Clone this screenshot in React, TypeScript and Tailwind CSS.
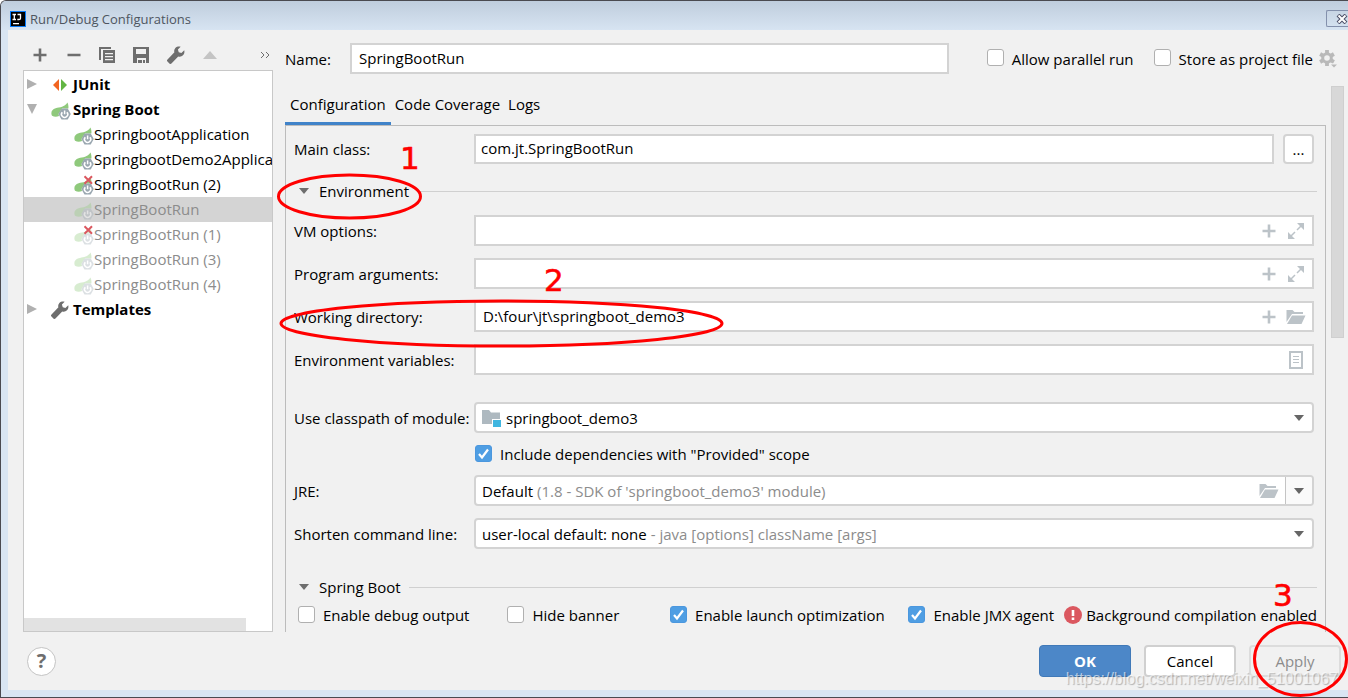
import type { ReactNode } from "react";
import clsx from "clsx";

interface TreeItem {
  label: string;
  faded?: boolean;
  broken?: boolean;
  selected?: boolean;
}

const CONFIGS: TreeItem[] = [
  { label: "SpringbootApplication" },
  { label: "SpringbootDemo2Application" },
  { label: "SpringBootRun (2)", broken: true },
  { label: "SpringBootRun", faded: true, selected: true },
  { label: "SpringBootRun (1)", faded: true, broken: true },
  { label: "SpringBootRun (3)", faded: true },
  { label: "SpringBootRun (4)", faded: true },
];

const FIELD = "h-[31px] bg-white border-2 border-[#d3d3d3]";

function IdeaLogo() {
  return (
    <svg className="w-4 h-4 shrink-0" viewBox="0 0 16 16">
      <path d="M0 0h16v16H0z" fill="#087cfa" />
      <path d="M1 1h14v14H1z" fill="#000" />
      <path d="M2.500 3.500h3.500M4.300 3.500v5M2.500 8.500h3.500M7.500 3.500h3v3.700q0 1.300-1.500 1.300H7.300" fill="none" stroke="#fff" strokeWidth="1.3" />
      <path d="M3 12h6v1.300H3z" fill="#fff" />
    </svg>
  );
}

function PlusIcon() {
  return (
    <svg className="w-3.5 h-3.5" viewBox="0 0 14 14">
      <path d="M5.700.5h2.600v5.200h5.200v2.600H8.300v5.200H5.700V8.300H.5V5.700h5.200z" fill="currentColor" />
    </svg>
  );
}

function MinusIcon() {
  return (
    <svg className="w-3.5 h-3.5" viewBox="0 0 14 14">
      <path d="M.5 5.700h13v2.600H.5z" fill="currentColor" />
    </svg>
  );
}

function CopyIcon() {
  return (
    <svg className="w-4 h-4" viewBox="0 0 16 16">
      <path d="M0 0h12v2H2v11H0z" fill="currentColor" />
      <path fillRule="evenodd" d="M4 3h12v13H4zM6 6v1.2h8V6zM6 9v1.2h8V9zM6 12v1.2h8V12z" fill="currentColor" />
    </svg>
  );
}

function SaveIcon() {
  return (
    <svg className="w-4 h-4" viewBox="0 0 16 16">
      <path fillRule="evenodd" d="M0 0h16v16h-3v-5H4v5H0zM3 2v5h10V2z" fill="currentColor" />
      <path d="M5 13h4v3H5zM10 13h2v3h-2z" fill="currentColor" />
    </svg>
  );
}

function WrenchIcon() {
  return (
    <svg className="w-[18px] h-[18px] shrink-0" viewBox="0 0 17 17">
      <path
        d="M16.3 4.1 13.6 6.7 11.1 6 10.3 3.4 12.9.6C11.2.1 9.2.4 7.9 1.8 6.8 3 6.500 4.600 7 6L.5 12.700a1.400 1.400 0 0 0 0 2L2.200 16.500a1.400 1.400 0 0 0 2 0L10.600 9.800c1.500.6 3.300.2 4.500-1 1.200-1.300 1.600-3.100 1.200-4.700z"
        fill="currentColor"
      />
    </svg>
  );
}

function Arrow({ dir, className }: { dir: "up" | "down" | "right"; className: string }) {
  const d = dir === "up" ? "M0 10 5 0l5 10z" : dir === "down" ? "M0 0h10L5 10z" : "M0 0l10 5-10 5z";
  return (
    <svg className={className} viewBox="0 0 10 10" preserveAspectRatio="none">
      <path d={d} fill="currentColor" />
    </svg>
  );
}

function JUnitIcon() {
  return (
    <svg className="w-[18px] h-[18px] shrink-0" viewBox="0 0 18 18">
      <path d="M8 3v12L2 9z" fill="#f26522" />
      <path d="M10 3v12l6-6z" fill="#62b543" />
    </svg>
  );
}

function SpringIcon({ faded, broken }: { faded?: boolean; broken?: boolean }) {
  return (
    <svg className="w-5 h-5 shrink-0" viewBox="0 0 20 20">
      <g opacity={faded ? 0.35 : 1}>
        <path
          d="M16.500 2.500c.9 2 1.100 4 .9 6H11L7.500 14l.6 2C5.500 17.200 3.400 17 1 15.800-.6 12.500.8 9.500 4.600 8.300 9 7 13.500 7.300 16.500 2.500z"
          fill="#8fc97c"
        />
        <path d="M10.500 8.500h6.200l3.100 5.500-3.100 5.500h-6.200L7.400 14z" fill="#9aa7b0" />
        <path d="M11.300 12.200a3.100 3.100 0 1 0 4.600 0M13.600 10.500v3.700" fill="none" stroke="#fff" strokeWidth="1.500" />
      </g>
      {broken && <path d="m10.500 1.300 7.500 7.500m0-7.500-7.500 7.500" stroke="#db5860" strokeWidth="2" />}
    </svg>
  );
}

function GearIcon() {
  return (
    <svg className="w-[18px] h-[18px]" viewBox="0 0 18 18">
      <path d="M8 0v16M1.100 4l13.800 8M14.900 4l-13.800 8" stroke="#b9b9b9" strokeWidth="3.800" />
      <circle cx="8" cy="8" r="4.300" fill="#f1f1f1" stroke="#b9b9b9" strokeWidth="3" />
      <path d="M10.500 13.500H18v4h-4z" fill="#f1f1f1" />
      <path d="M12 14.500h6l-3 3z" fill="#b9b9b9" />
    </svg>
  );
}

function ExpandIcon() {
  return (
    <svg className="w-4 h-4" viewBox="0 0 16 16">
      <path d="M9 0h7v7zM0 9v7h7z" fill="currentColor" />
      <path d="m9 7 4-4M7 9l-4 4" stroke="currentColor" strokeWidth="1.500" />
    </svg>
  );
}

function FolderIcon() {
  return (
    <svg className="w-5 h-4" viewBox="0 0 20 16">
      <path d="M.5 1h6l2 2h8.500v2H6L.5 13z" fill="currentColor" />
      <path d="M6 6.500h13.500L15.500 15H1z" fill="currentColor" />
    </svg>
  );
}

function ListIcon() {
  return (
    <svg className="w-3.5 h-[18px]" viewBox="0 0 14 18">
      <path d="M1 1h12v16H1z" fill="none" stroke="currentColor" strokeWidth="2" />
      <path d="M4 5.500h6M4 8.500h6M4 11.500h6" stroke="currentColor" strokeWidth="1.200" />
    </svg>
  );
}

function ModuleIcon() {
  return (
    <svg className="w-5 h-5 shrink-0" viewBox="0 0 20 20">
      <path d="M0 2h7l2 2.500h9v6.500h-8v5H0z" fill="#aeb9c0" />
      <path d="M11 12h8v7h-8z" fill="#40b6e0" />
    </svg>
  );
}

function CheckBox({ label, checked }: { label: string; checked?: boolean }) {
  return (
    <label className="flex items-center gap-2 whitespace-nowrap">
      <span className="grid pb-0.5">
        <input
          type="checkbox"
          defaultChecked={checked}
          className="peer col-start-1 row-start-1 appearance-none w-[17px] h-[17px] rounded-[3px] border border-[#b0b0b0] bg-white checked:border-[#4b97de] checked:bg-[#4f9ee3]"
        />
        <svg
          className="col-start-1 row-start-1 w-[17px] h-[17px] pointer-events-none opacity-0 peer-checked:opacity-100"
          viewBox="0 0 17 17"
        >
          <path d="m4 9 3 3.500L13 4.500" fill="none" stroke="#fff" strokeWidth="2.200" />
        </svg>
      </span>
      {label}
    </label>
  );
}

function TreeRow({ item }: { item: TreeItem }) {
  return (
    <li
      className={clsx(
        "flex items-center h-[25px] pl-[50px] pb-0.5 whitespace-nowrap",
        item.selected && "bg-[#d4d4d4]",
        item.faded && "text-[#8c8c8c]",
      )}
    >
      <span className="pt-0.5">
        <SpringIcon faded={item.faded} broken={item.broken} />
      </span>
      {item.label}
    </li>
  );
}

function TreeGroup({ label, icon, open }: { label: string; icon: ReactNode; open?: boolean }) {
  return (
    <div className="flex items-center h-[25px] pb-0.5 font-bold">
      <span className="w-[27px] pl-[3px] text-[#b0b0b0]">
        <Arrow dir={open ? "down" : "right"} className="w-2.5 h-2.5" />
      </span>
      <span className="w-[22px] pt-0.5 flex justify-start">{icon}</span>
      {label}
    </div>
  );
}

function Row({ id, label, children }: { id: string; label: string; children: ReactNode }) {
  return (
    <div className="flex items-center">
      <label htmlFor={id} className="w-[180px] shrink-0">
        {label}
      </label>
      {children}
    </div>
  );
}

interface TextFieldProps {
  id: string;
  value?: string;
  addable?: boolean;
  icon: ReactNode;
}

function TextField({ id, value, addable, icon }: TextFieldProps) {
  return (
    <div className={clsx(FIELD, "flex-1 flex items-center pr-1.5 text-[#bcc3c8]")}>
      <input id={id} defaultValue={value} className="flex-1 min-w-0 h-full px-[7px] pb-0.5 text-black outline-none" />
      {addable && <PlusIcon />}
      <span className="w-5 ml-2.5 flex justify-center">{icon}</span>
    </div>
  );
}

// The native select sits transparent on top of the two-tone value
function Combo({ id, text, children, split }: { id: string; text: string; children: ReactNode; split?: boolean }) {
  return (
    <div className={clsx(FIELD, "flex-1 relative flex items-center rounded-[4px] overflow-hidden")}>
      <span className="flex-1 flex items-center gap-1 pl-[6px] whitespace-nowrap">{children}</span>
      {split && (
        <span className="pr-1.5 text-[#bcc3c8]">
          <FolderIcon />
        </span>
      )}
      <span
        className={clsx(
          "w-[27px] h-full flex items-center justify-center text-[#666]",
          split && "border-l border-[#c4c4c4] bg-[#fafafa]",
        )}
      >
        <Arrow dir="down" className="w-2.5 h-1.5" />
      </span>
      <select id={id} className="absolute inset-0 w-full h-full opacity-0">
        <option>{text}</option>
      </select>
    </div>
  );
}

function Section({ title }: { title: string }) {
  return (
    <div className="flex items-center h-5 gap-2">
      <button className="flex items-center gap-2.5 pl-[5px]">
        <Arrow dir="down" className="w-2.5 h-1.5 text-[#6e6e6e]" />
        {title}
      </button>
      <span className="flex-1 h-px bg-[#d0d0d0]" />
    </div>
  );
}

function Sidebar() {
  return (
    <aside className="w-[250px] shrink-0 flex flex-col">
      <div className="flex items-center h-10 pt-2.5 pl-2.5 pr-[3px] gap-[18px] text-[#6e6e6e]">
        <button aria-label="Add" className="mr-0.5"><PlusIcon /></button>
        <button aria-label="Remove"><MinusIcon /></button>
        <button aria-label="Copy"><CopyIcon /></button>
        <button aria-label="Save"><SaveIcon /></button>
        <button aria-label="Edit templates"><WrenchIcon /></button>
        <button aria-label="Move up" className="text-[#c4c4c4]">
          <Arrow dir="up" className="w-3.5 h-2" />
        </button>
        <button aria-label="More" className="ml-auto">
          <svg className="w-2.5 h-2" viewBox="0 0 10 8">
            <path d="m1 1 3 3-3 3M6 1l3 3-3 3" fill="none" stroke="currentColor" />
          </svg>
        </button>
      </div>
      <div className="flex-1 flex flex-col bg-white border border-[#c8c8c8] pt-px overflow-hidden">
        <TreeGroup label="JUnit" icon={<JUnitIcon />} />
        <TreeGroup label="Spring Boot" icon={<SpringIcon />} open />
        <ul>
          {CONFIGS.map((item) => (
            <TreeRow key={item.label} item={item} />
          ))}
        </ul>
        <TreeGroup label="Templates" icon={<span className="text-[#6e6e6e]"><WrenchIcon /></span>} />
        <div className="mt-auto mr-[26px] h-[13px] bg-[#e2e2e2]" />
      </div>
    </aside>
  );
}

function ConfigPanel() {
  return (
    <div className="flex-1 flex flex-col border-t border-x border-[#bcbcbc] px-2 pt-2">
      <Row id="main-class" label="Main class:">
        <input
          id="main-class"
          defaultValue="com.jt.SpringBootRun"
          className="flex-1 min-w-0 h-[30px] px-[5px] pb-0.5 bg-white border-2 border-[#d3d3d3] outline-none"
        />
        <button className="w-[31px] h-[30px] ml-[9px] mr-[3px] rounded-[4px] border-2 border-[#d3d3d3] bg-white leading-5">
          ...
        </button>
      </Row>
      <div className="mt-[17px]">
        <Section title="Environment" />
      </div>
      <div className="flex flex-col gap-3 mt-3.5 mr-[3px]">
        <Row id="vm" label="VM options:">
          <TextField id="vm" addable icon={<ExpandIcon />} />
        </Row>
        <Row id="args" label="Program arguments:">
          <TextField id="args" addable icon={<ExpandIcon />} />
        </Row>
        <Row id="dir" label="Working directory:">
          <TextField id="dir" value="D:\four\jt\springboot_demo3" addable icon={<FolderIcon />} />
        </Row>
        <Row id="env" label="Environment variables:">
          <TextField id="env" icon={<ListIcon />} />
        </Row>
      </div>
      <div className="mt-[27px] mr-[3px]">
        <Row id="module" label="Use classpath of module:">
          <Combo id="module" text="springboot_demo3">
            <ModuleIcon />
            springboot_demo3
          </Combo>
        </Row>
        <div className="flex items-center h-[42px] pl-[181px]">
          <CheckBox label={'Include dependencies with "Provided" scope'} checked />
        </div>
        <div className="flex flex-col gap-3">
          <Row id="jre" label="JRE:">
            <Combo id="jre" text="Default (1.8 - SDK of 'springboot_demo3' module)" split>
              Default <span className="text-[#8c8c8c]">(1.8 - SDK of 'springboot_demo3' module)</span>
            </Combo>
          </Row>
          <Row id="shorten" label="Shorten command line:">
            <Combo id="shorten" text="user-local default: none - java [options] className [args]">
              user-local default: none <span className="text-[#8c8c8c]">- java [options] className [args]</span>
            </Combo>
          </Row>
        </div>
      </div>
      <div className="mt-7">
        <Section title="Spring Boot" />
      </div>
      <div className="grid grid-cols-[210fr_163fr_239fr_auto_auto] items-center h-5 mt-2 pl-1">
        <CheckBox label="Enable debug output" />
        <CheckBox label="Hide banner" />
        <CheckBox label="Enable launch optimization" checked />
        <CheckBox label="Enable JMX agent" checked />
        <span className="flex items-center gap-1 pl-2.5 whitespace-nowrap">
          <svg className="w-[18px] h-[18px]" viewBox="0 0 18 18">
            <circle cx="9" cy="9" r="9" fill="#db5860" />
            <path d="M7.700 4h2.600v6H7.700zM7.700 11.500h2.600V14H7.700z" fill="#fff" />
          </svg>
          Background compilation enabled
        </span>
      </div>
    </div>
  );
}

function Annotations() {
  return (
    <svg className="absolute left-0 top-0 w-[1348px] h-[698px] pointer-events-none" viewBox="0 0 1348 698">
      <g fill="none" stroke="#f00" strokeWidth="3">
        <ellipse cx="348.500" cy="195.500" rx="71" ry="21.500" />
        <ellipse cx="500.500" cy="322.500" rx="220.500" ry="22.500" />
        <ellipse cx="1299.500" cy="658" rx="46" ry="36.500" />
      </g>
      <g fill="#f00" stroke="#f00" strokeWidth="0.6" fontFamily="DejaVu Sans" fontSize="31">
        <text x="399" y="168">1</text>
        <text x="543" y="290">2</text>
        <text x="1272" y="605">3</text>
      </g>
    </svg>
  );
}

export default function App() {
  return (
    <div className="relative min-h-screen flex flex-col overflow-hidden rounded-tl-[6px] border-t border-l border-b border-[#4a4a50] bg-[#d9e5f2] font-['Open_Sans','Noto_Sans',sans-serif] text-[15px] leading-5 text-black">
      <header className="flex items-center justify-between h-[29px] pl-[9px] pt-1.5 bg-linear-to-b from-[#bfcddd] to-[#d7e4f2]">
        <h1 className="flex items-center gap-1 text-[13px] text-[#4d5560]">
          <IdeaLogo />
          Run/Debug Configurations
        </h1>
        <button
          aria-label="Close"
          className="flex items-center justify-end w-[22px] h-[17px] rounded-l-[2px] border border-r-0 border-[#8390ac]"
        >
          <svg className="w-3 h-2.5" viewBox="0 0 12 10">
            <path d="m2 1 8 8m0-8-8 8" stroke="#4a4d66" strokeWidth="4" />
            <path d="m2.500 1.500 7 7m0-7-7 7" stroke="#fff" strokeWidth="2" />
          </svg>
        </button>
      </header>
      <div className="flex-1 flex flex-col ml-[7px] mb-[7px] bg-[#f1f1f1]">
        <div className="flex-1 flex gap-3 pl-[15px]">
          <Sidebar />
          <main className="flex-1 min-w-0 flex flex-col">
            <div className="flex items-center pt-[13px] pr-[11px]">
              <label htmlFor="name" className="w-[65px]">Name:</label>
              <input
                id="name"
                defaultValue="SpringBootRun"
                className={clsx(FIELD, "flex-1 min-w-0 px-[7px] pb-0.5 mr-[38px] outline-none")}
              />
              <CheckBox label="Allow parallel run" />
              <span className="w-5" />
              <CheckBox label="Store as project file" />
              <button aria-label="Storage options" className="ml-1.5"><GearIcon /></button>
            </div>
            <div className="flex-1 flex pr-1 pt-3">
              <div className="flex-1 min-w-0 flex flex-col">
                <nav className="flex items-start h-10 -mb-px">
                  <button className="h-full px-[5px] border-b-4 border-[#4083c9]">Configuration</button>
                  <button className="h-full px-1 border-b-4 border-transparent">Code Coverage</button>
                  <button className="h-full px-1 border-b-4 border-transparent">Logs</button>
                </nav>
                <ConfigPanel />
              </div>
              <div className="w-[13px] h-[252px] ml-[5px] border border-[#cfcfcf] bg-[#d8d8d8]" />
            </div>
          </main>
        </div>
        <footer className="flex items-center h-[58px] pl-[19px] pr-[7px] gap-[13px]">
          <button className="w-[29px] h-[29px] mr-auto rounded-full border border-[#c4c4c4] bg-white text-[20px] font-bold text-[#6e6e6e]">
            ?
          </button>
          <button className="w-[92px] h-8 rounded-[4px] border border-[#4079b8] bg-[#4c87c8] font-bold text-white">OK</button>
          <button className="w-[92px] h-8 rounded-[4px] border-2 border-[#d0d0d0] bg-white">Cancel</button>
          <button disabled className="w-[92px] h-8 rounded-[4px] border-2 border-[#dcdcdc] text-[#8c8c8c]">Apply</button>
        </footer>
      </div>
      <span className="absolute right-2.5 bottom-2 font-['Liberation_Sans',sans-serif] text-[16px] text-white/60 [text-shadow:1px_1px_1px_#0004] pointer-events-none">
        https://blog.csdn.net/weixin_51001067
      </span>
      <Annotations />
    </div>
  );
}
